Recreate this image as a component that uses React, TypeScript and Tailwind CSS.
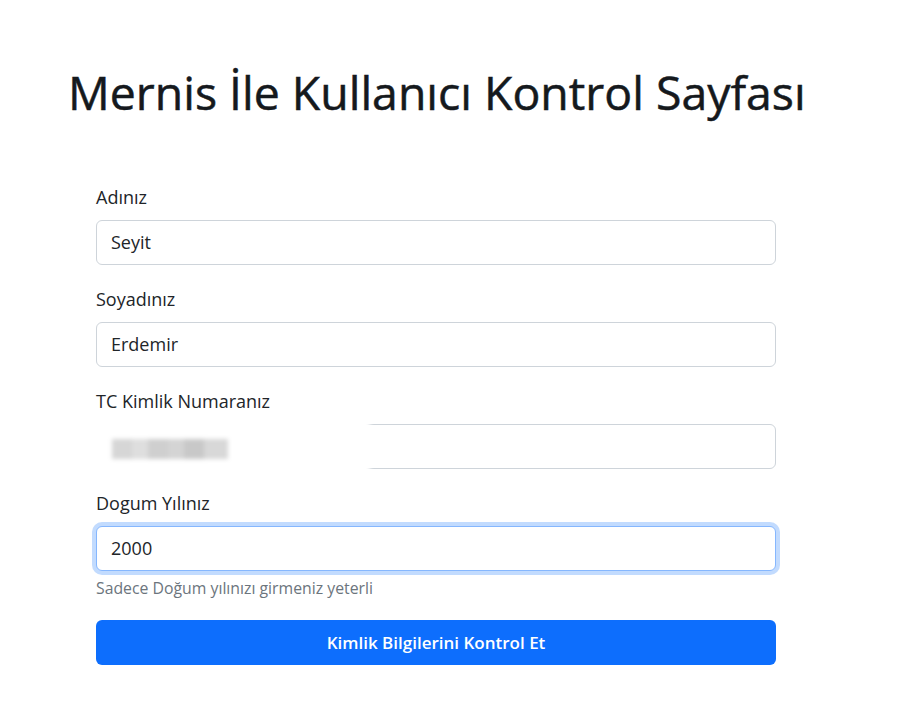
import React from "react";

const font = { fontFamily: '"Open Sans", "Noto Sans", sans-serif' };

function Field({ label, value, focused }: { label: string; value: string; focused?: boolean }) {
  return (
    <div>
      <div className="text-[18px] leading-[28px] mb-[9px] text-[#212529]">{label}</div>
      <div
        className={
          "h-[45px] w-[680px] rounded-[6px] border bg-white px-[14px] flex items-center text-[18px] text-[#212529] " +
          (focused
            ? "border-[#86b7fe] shadow-[0_0_0_4px_rgba(13,110,253,0.25)]"
            : "border-[#ced4da]")
        }
      >
        {value}
      </div>
    </div>
  );
}

export default function App() {
  return (
    <div className="min-h-[702px] w-[910px] bg-white" style={font}>
      <div className="pt-[64px] pl-[68px]">
        <h1 className="text-[46.4px] leading-[56px] font-normal text-[#15191d] [-webkit-text-stroke:0.5px_#15191d]">
          Mernis İle Kullanıcı Kontrol Sayfası
        </h1>
      </div>
      <div className="ml-[96px] mt-[63px] w-[680px] flex flex-col">
        <div className="mb-[20px]">
          <Field label="Adınız" value="Seyit" />
        </div>
        <div className="mb-[20px]">
          <Field label="Soyadınız" value="Erdemir" />
        </div>
        <div className="mb-[20px] relative">
          <Field label="TC Kimlik Numaranız" value="" />
          <div className="absolute left-[-8px] top-[30px] w-[282px] h-[58px] bg-white blur-[2px]">
            <div className="absolute left-[24px] top-[22px] flex h-[20px]">
              <div className="w-[20px] h-full bg-[#d6d6d6]" />
              <div className="w-[16px] h-full bg-[#dedede]" />
              <div className="w-[20px] h-full bg-[#cfcfcf]" />
              <div className="w-[16px] h-full bg-[#d4d4d4]" />
              <div className="w-[20px] h-full bg-[#c8c8c8]" />
              <div className="w-[24px] h-full bg-[#d8d8d8]" />
            </div>
          </div>
        </div>
        <div>
          <Field label="Dogum Yılınız" value="2000" focused />
        </div>
        <div className="mt-[5px] text-[15.8px] leading-[25px] text-[#6c757d]">
          Sadece Doğum yılınızı girmeniz yeterli
        </div>
        <button className="mt-[19px] h-[45px] w-[680px] rounded-[6px] bg-[#0d6efd] text-white text-[17px] font-semibold">
          Kimlik Bilgilerini Kontrol Et
        </button>
      </div>
    </div>
  );
}
